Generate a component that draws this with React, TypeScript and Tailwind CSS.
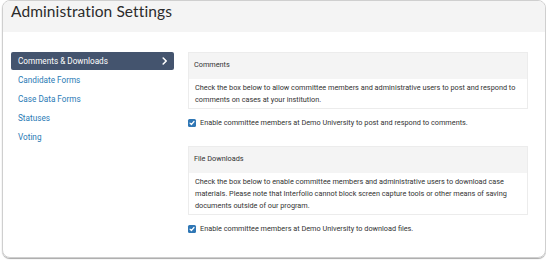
import React from "react";

const navItems = ["Candidate Forms", "Case Data Forms", "Statuses", "Voting"];

function Check() {
  return (
    <span className="flex h-[8px] w-[8px] shrink-0 items-center justify-center rounded-[1.5px] bg-[#2f77b5]">
      <svg width="6" height="6" viewBox="0 0 6 6" fill="none">
        <path d="M1 3.1 L2.4 4.5 L5 1.5" stroke="white" strokeWidth="1.2" strokeLinecap="round" strokeLinejoin="round" />
      </svg>
    </span>
  );
}

function Box({ title, lines }: { title: string; lines: string[] }) {
  return (
    <div className="border border-[#ececec]">
      <div className="flex h-[26px] items-center bg-[#f4f4f4] pl-[5px] pb-[1px] text-[7.3px] text-[#333]">{title}</div>
      <div className="bg-white pt-[3px] pb-[2px] pl-[6px] text-[7.3px] leading-[12px] text-[#333] whitespace-nowrap">
        {lines.map((l) => (
          <div key={l}>{l}</div>
        ))}
      </div>
    </div>
  );
}

export default function App() {
  return (
    <div className="h-[261px] w-[546px] overflow-hidden bg-white" style={{ fontFamily: "Roboto, 'Liberation Sans', sans-serif" }}>
      <div className="ml-[2px] h-[258px] w-[544px] overflow-hidden rounded-[8px] border border-[#cfcfcf] shadow-[0_1px_1px_rgba(0,0,0,0.35)]">
        <div className="flex h-[31px] items-start bg-[#f4f4f4] pl-[8px]">
          <span className="text-[15.5px] leading-[20px] text-[#2b2b2b]" style={{ fontFamily: "Lato, sans-serif", letterSpacing: "0.1px" }}>
            Administration Settings
          </span>
        </div>
        <div className="flex pl-[8px] pt-[20px]">
          <div className="w-[163px] shrink-0">
            <div className="flex h-[18px] items-center justify-between rounded-[2px] bg-[#44546e] pl-[7px] pr-[6px] text-[8.2px] text-white">
              <span>Comments &amp; Downloads</span>
              <svg width="6" height="8" viewBox="0 0 6 8" fill="none">
                <path d="M1.2 1 L4.2 4 L1.2 7" stroke="white" strokeWidth="1.6" strokeLinecap="round" strokeLinejoin="round" />
              </svg>
            </div>
            {navItems.map((n) => (
              <div key={n} className="flex h-[19px] items-center pl-[7px] pt-[1px] text-[8.2px] text-[#2a7ab5]">
                {n}
              </div>
            ))}
          </div>
          <div className="ml-[14px] w-[340px]">
            <Box
              title="Comments"
              lines={[
                "Check the box below to allow committee members and administrative users to post and respond to",
                "comments on cases at your institution.",
              ]}
            />
            <div className="mt-[9px] flex h-[10px] items-center gap-[4px] text-[7.3px] text-[#333]">
              <Check />
              <span>Enable committee members at Demo University to post and respond to comments.</span>
            </div>
            <div className="mt-[18px]">
              <Box
                title="File Downloads"
                lines={[
                  "Check the box below to enable committee members and administrative users to download case",
                  "materials. Please note that Interfolio cannot block screen capture tools or other means of saving",
                  "documents outside of our program.",
                ]}
              />
            </div>
            <div className="mt-[9px] flex h-[10px] items-center gap-[4px] text-[7.3px] text-[#333]">
              <Check />
              <span>Enable committee members at Demo University to download files.</span>
            </div>
          </div>
        </div>
      </div>
    </div>
  );
}
